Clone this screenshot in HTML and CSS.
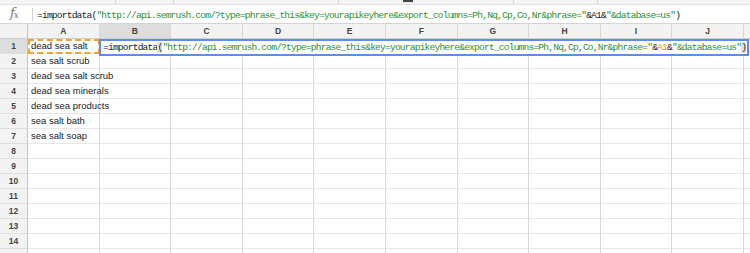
FILE: index.html
```html
<!DOCTYPE html>
<html lang="en">
<head>
  <meta charset="UTF-8">
  <title>Sheet - importdata</title>
  <link rel="stylesheet" href="styles.css">
</head>
<body>
  <div class="toolbar-edge">
    <span class="tb-div tb-1"></span>
    <span class="tb-div tb-2"></span>
    <span class="tb-div tb-3"></span>
    <span class="tb-block"></span>
    <span class="tb-div tb-4"></span>
    <span class="tb-div tb-5"></span>
  </div>

  <div class="formula-bar">
    <span class="fx">f<sub>x</sub></span>
    <span class="fx-sep"></span>
    <div class="formula"><span class="fn">=importdata(</span><span class="str">"http://api.semrush.com/?type=phrase_this&amp;key=yourapikeyhere&amp;export_columns=Ph,Nq,Cp,Co,Nr&amp;phrase="</span><span class="fn">&amp;A1&amp;</span><span class="str">"&amp;database=us"</span><span class="fn">)</span></div>
  </div>

  <div class="sheet">
    <div class="corner"></div>
    <div class="col-head">A</div>
    <div class="col-head active">B</div>
    <div class="col-head">C</div>
    <div class="col-head">D</div>
    <div class="col-head">E</div>
    <div class="col-head">F</div>
    <div class="col-head">G</div>
    <div class="col-head">H</div>
    <div class="col-head">I</div>
    <div class="col-head">J</div>
    <div class="col-head rest"></div>
  </div>

  <div class="editor"><span class="fn">=importdata</span><span class="paren">(</span><span class="str">"http://api.semrush.com/?type=phrase_this&amp;key=yourapikeyhere&amp;export_columns=Ph,Nq,Cp,Co,Nr&amp;phrase="</span><span class="fn">&amp;</span><span class="ref">A1</span><span class="fn">&amp;</span><span class="str">"&amp;database=us"</span><span class="paren">)</span></div>

  <script>
    const words = ['dead sea salt', 'sea salt scrub', 'dead sea salt scrub', 'dead sea minerals',
                   'dead sea products', 'sea salt bath', 'sea salt soap'];
    const sheet = document.querySelector('.sheet');
    for (let r = 1; r <= 15; r++) {
      let html = `<div class="row-head${r === 1 ? ' active' : ''}">${r}</div>`;
      for (let c = 0; c < 10; c++) {
        const text = c === 0 && words[r - 1] ? words[r - 1] : '';
        const cls = r === 1 && c === 0 ? 'cell copied' : 'cell';
        html += `<div class="${cls}">${text}</div>`;
      }
      html += '<div class="cell rest"></div>';
      sheet.insertAdjacentHTML('beforeend', html);
    }
  </script>
</body>
</html>
```

FILE: styles.css
```css
* {
  box-sizing: border-box;
}
body {
  margin: 0;
  background: #fff;
  font-family: 'Liberation Sans', Arial, sans-serif;
  color: #222;
  overflow: hidden;
  position: relative;
  height: 253px;
}
.toolbar-edge {
  height: 5px;
  background: #f5f5f5;
  border-bottom: 1px solid #e3e3e3;
  position: relative;
}
.tb-div {
  position: absolute;
  top: 0;
  width: 1px;
  height: 4px;
  background: #d6d6d6;
}
.tb-1 { left: 115px; }
.tb-2 { left: 173px; }
.tb-3 { left: 338px; }
.tb-4 { left: 513px; }
.tb-5 { left: 597px; }
.tb-block {
  position: absolute;
  top: 0;
  left: 403px;
  width: 10px;
  height: 2px;
  background: #444;
}
.formula-bar {
  height: 19px;
  display: flex;
  align-items: center;
  border-bottom: 1px solid #d4d4d4;
}
.fx {
  width: 32px;
  padding-left: 10px;
  font-family: 'DejaVu Serif', serif;
  font-style: italic;
  font-size: 13px;
  color: #7a7a7a;
  line-height: 13px;
}
.fx sub {
  font-size: 9px;
  vertical-align: -1px;
  margin-left: -1px;
}
.fx-sep {
  width: 1px;
  height: 13px;
  background: #d0d0d0;
  margin-right: 4px;
}
.formula, .editor {
  font-family: 'Liberation Mono', monospace;
  font-size: 9.6px;
  letter-spacing: -0.81px;
  white-space: nowrap;
}
.formula {
  color: #222;
  margin-top: 2px;
}
.fn {
  color: #222;
}
.str {
  color: #2e8f33;
}
.ref {
  color: #f29100;
}
.sheet {
  display: grid;
  grid-template-columns: 28px repeat(10, 71.6px) 1fr;
  grid-auto-rows: 15px;
}
.corner, .col-head, .row-head {
  background: #f3f3f3;
  border-right: 1px solid #d8d8d8;
  border-bottom: 1px solid #cfcfcf;
  font-size: 8.5px;
  font-weight: bold;
  color: #444;
  display: flex;
  align-items: center;
  justify-content: center;
}
.corner {
  border-right-color: #c4c4c4;
}
.row-head {
  border-right: 1px solid #c4c4c4;
  border-bottom-color: #dedede;
}
.col-head.active, .row-head.active {
  background: #dddddd;
}
.col-head.rest {
  border-right: none;
}
.cell {
  border-right: 1px solid #dadada;
  border-bottom: 1px solid #e6e6e6;
  font-size: 9.5px;
  line-height: 14px;
  padding-left: 3px;
  white-space: nowrap;
  color: #222;
}
.cell.rest {
  border-right: none;
}
.copied {
  outline: 2px dashed #f5a033;
  outline-offset: -2px;
}
.editor {
  position: absolute;
  left: 99px;
  top: 39px;
  width: 650px;
  height: 17px;
  background: #fff;
  border: 2px solid #5a8ef2;
  padding-left: 2px;
  line-height: 13px;
  color: #222;
}
.paren {
  background: #e2e2e2;
  color: #222;
}
```
